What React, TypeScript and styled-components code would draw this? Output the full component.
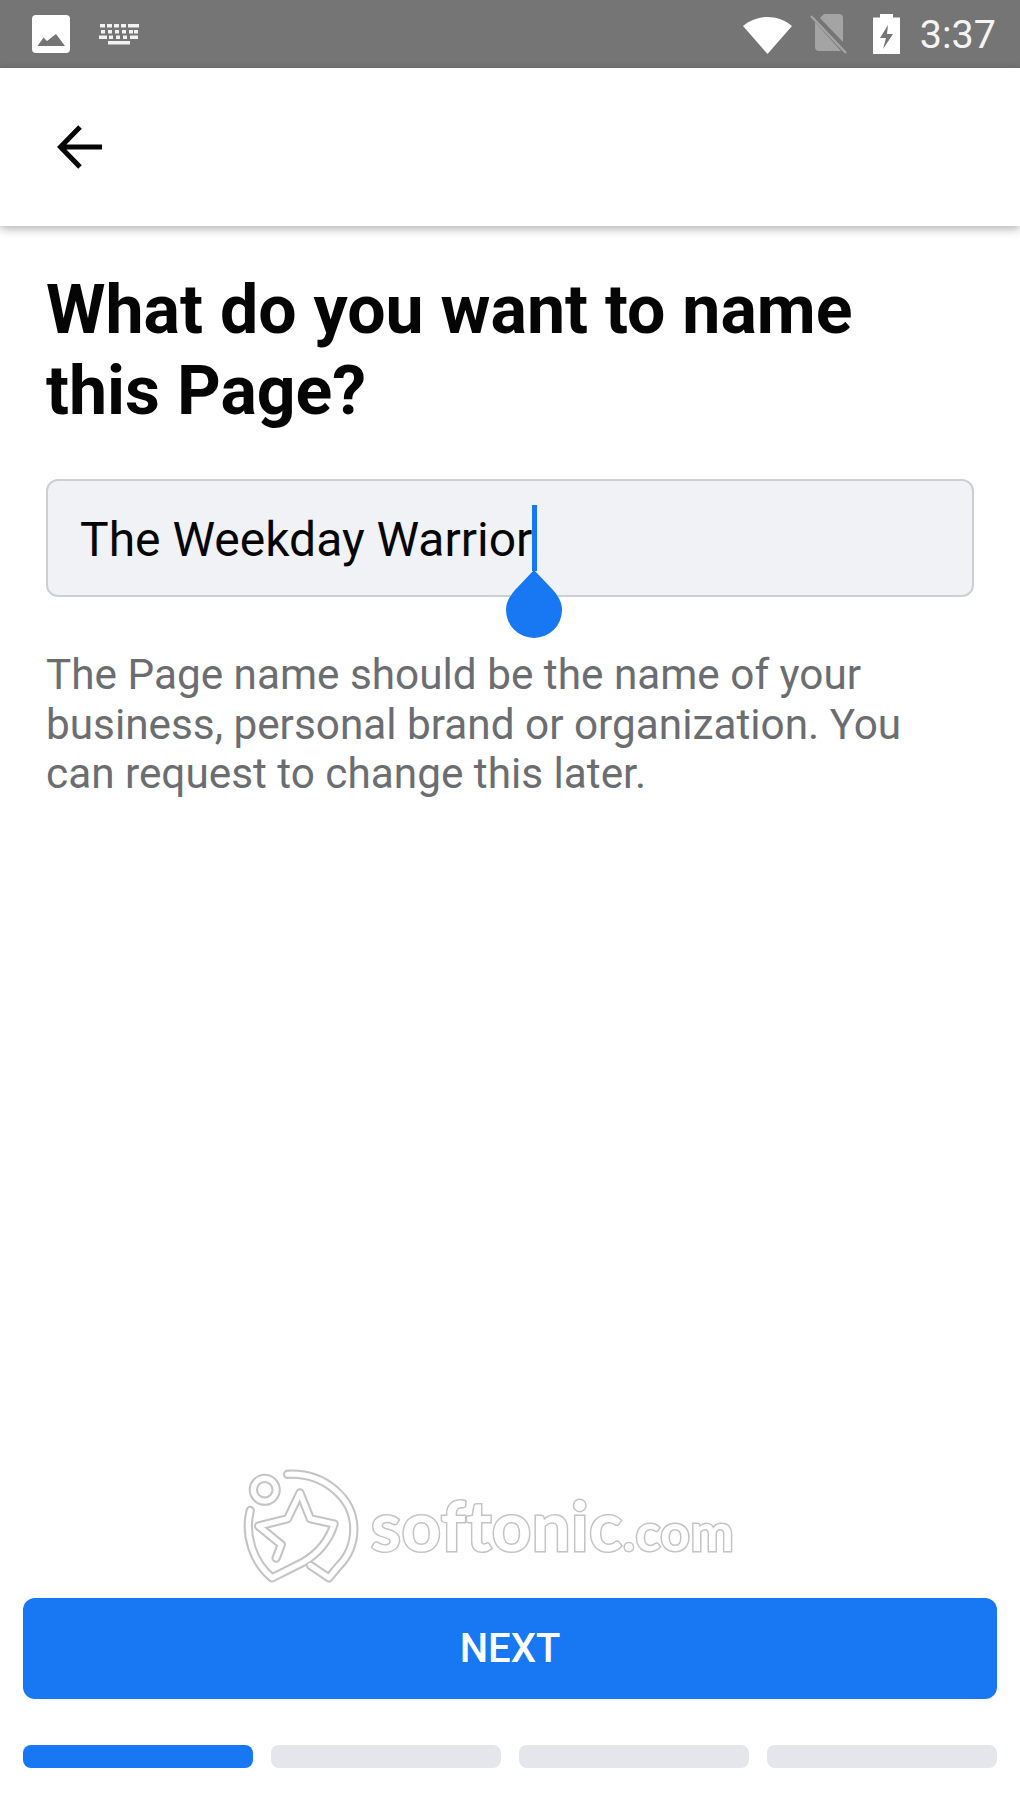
import React from "react";
import styled, { createGlobalStyle } from "styled-components";

const Global = createGlobalStyle`
  html, body { margin: 0; padding: 0; background: #fff; }
  * { box-sizing: border-box; }
`;

const Page = styled.div`
  width: 1020px;
  height: 1813px;
  display: flex;
  flex-direction: column;
  background: #fff;
  font-family: Roboto, "Liberation Sans", sans-serif;
  overflow: hidden;
`;

const StatusBar = styled.div`
  height: 68px;
  flex: none;
  background: #757575;
  display: flex;
  align-items: center;
  padding: 0 24px 0 32px;
`;

const StatusLeft = styled.div`
  display: flex;
  align-items: center;
  gap: 29px;
`;

const StatusRight = styled.div`
  margin-left: auto;
  display: flex;
  align-items: center;
`;

const Clock = styled.span`
  color: #f4f4f4;
  font-size: 39.5px;
  font-weight: 400;
  margin-left: 20px;
`;

const Header = styled.header`
  height: 158px;
  flex: none;
  display: flex;
  align-items: center;
  padding-left: 57px;
  background: #fff;
  box-shadow: 0 3px 9px rgba(0, 0, 0, 0.3);
  position: relative;
`;

const Content = styled.main`
  flex: 1;
  display: flex;
  flex-direction: column;
  padding: 44px 46px 0;
`;

const Title = styled.h1`
  margin: 0;
  font-size: 68px;
  line-height: 81px;
  font-weight: 700;
  color: #050505;
`;

const Field = styled.div`
  position: relative;
  margin-top: 47px;
  height: 118px;
  display: flex;
  align-items: center;
  padding: 3px 0 0 32px;
  background: #f0f2f5;
  border: 2px solid #ccd0d5;
  border-radius: 12px;
  font-size: 48px;
  color: #050505;
`;

const Cursor = styled.span`
  position: relative;
  display: inline-block;
  width: 0;
  height: 0;
`;

const CaretLine = styled.span`
  position: absolute;
  left: 0;
  top: -35px;
  width: 5px;
  height: 66px;
  background: #1877f2;
`;

const CaretHandle = styled.svg`
  position: absolute;
  left: -26px;
  top: 30px;
`;

const Help = styled.p`
  margin: 0;
  margin-top: 53px;
  font-size: 42.3px;
  line-height: 49.5px;
  color: #6b6d71;
`;

const Footer = styled.footer`
  flex: none;
  display: flex;
  flex-direction: column;
  padding: 0 23px 45px;
`;

const Watermark = styled.div`
  display: flex;
  align-items: center;
  justify-content: center;
  gap: 12px;
  height: 116px;
  margin-bottom: 15px;
  padding-right: 43px;
`;

const WatermarkText = styled.span`
  font-family: Lato, "Open Sans", sans-serif;
  font-size: 68.8px;
  font-weight: 700;
  letter-spacing: 0.5px;
  line-height: 1;
  color: #fff;
  -webkit-text-stroke: 3px #c4c4c4;
  paint-order: stroke fill;
  filter: blur(0.6px);
`;

const WatermarkSmall = styled.span`
  font-size: 51.6px;
`;

const LogoSvg = styled.svg`
  flex: none;
  filter: blur(0.6px);
`;

const NextButton = styled.button`
  height: 101px;
  width: 100%;
  border: 0;
  border-radius: 12px;
  background: #1877f2;
  color: #fff;
  font-family: Roboto, "Liberation Sans", sans-serif;
  font-size: 40px;
  font-weight: 500;
`;

const Progress = styled.div`
  margin-top: 46px;
  display: grid;
  grid-template-columns: repeat(4, 1fr);
  gap: 18px;
`;

const Step = styled.div<{ $active?: boolean }>`
  height: 23px;
  border-radius: 8px;
  background: ${(p) => (p.$active ? "#1877f2" : "#e4e6eb")};
`;

const PictureIcon = () => (
  <svg width="38" height="38" viewBox="0 0 38 38">
    <rect width="38" height="38" rx="4" fill="#fff" />
    <path d="M5.500 31 L11.500 22.500 L15 26 L24 19 L33 31 Z" fill="#757575" />
  </svg>
);

const KeyboardIcon = () => (
  <svg width="40" height="22" viewBox="0 0 40 22" fill="#f2f2f2">
    {[1, 8, 15, 22, 29, 34].map((x) => (
      <rect key={`a${x}`} x={x} y="1" width={x === 34 ? 6 : 5} height="3.500" />
    ))}
    {[1, 8, 15, 22, 29, 34].map((x) => (
      <rect key={`b${x}`} x={x + 1} y="7" width="4" height="3.500" />
    ))}
    {[1, 8, 15, 22, 29].map((x, i) => (
      <rect key={`c${x}`} x={i === 0 ? 0 : x + 2} y="12.500" width={i === 0 ? 8 : i === 4 ? 8 : 4} height="3.500" />
    ))}
    <rect x="9" y="18" width="22" height="3.500" />
  </svg>
);

const WifiIcon = () => (
  <svg width="49" height="39" viewBox="0 0 49 39">
    <path d="M0 11 C14 -1 35 -1 49 11 L24.500 39 Z" fill="#fff" />
  </svg>
);

const NoSimIcon = () => (
  <svg width="37" height="40" viewBox="0 0 37 40" style={{ marginLeft: 18 }}>
    <path d="M10 4 L14 0 H29 Q33 0 33 4 V28 Z M5 8 L31 37 H9 Q5 37 5 33 Z" fill="#a4a4a4" />
    <path d="M1 2 L36 39" stroke="#a4a4a4" strokeWidth="2.500" />
  </svg>
);

const BatteryIcon = () => (
  <svg width="27" height="41" viewBox="0 0 27 41" style={{ marginLeft: 26 }}>
    <path
      fillRule="evenodd"
      d="M7 0 H20 V3.500 H27 V40 H0 V3.500 H7 Z M15 11 L7 24 H13 L10 35 L20 20 H14 Z"
      fill="#fff"
    />
  </svg>
);

const BackIcon = () => (
  <svg width="46" height="46" viewBox="0 0 46 46" fill="none">
    <path d="M45 23 H4 M23 3 L3.500 23 L23 43" stroke="#050505" strokeWidth="5" />
  </svg>
);

const ARC = "M43 7 C78 5 107 30 107 60 C107 76 100 88 92 96 L83 107 L65 95";
const STAR = "M7 42 C1 66 10 92 28 107 L58 92 C75 82 84 68 88 55 L65 50 L55 25 L43 50 L15 57 L37 75 L32 88";

const SoftonicLogo = () => (
  <LogoSvg width="116" height="116" viewBox="0 0 112 112" fill="none">
    <g stroke="#c4c4c4" strokeWidth="9" strokeLinecap="round" strokeLinejoin="round">
      <circle cx="21" cy="22" r="11" />
      <path d={ARC} />
      <path d={STAR} />
    </g>
    <g stroke="#fff" strokeWidth="5" strokeLinecap="round" strokeLinejoin="round">
      <circle cx="21" cy="22" r="11" />
      <path d={ARC} />
      <path d={STAR} />
    </g>
  </LogoSvg>
);

export default function App() {
  return (
    <Page>
      <Global />
      <StatusBar>
        <StatusLeft>
          <PictureIcon />
          <KeyboardIcon />
        </StatusLeft>
        <StatusRight>
          <WifiIcon />
          <NoSimIcon />
          <BatteryIcon />
          <Clock>3:37</Clock>
        </StatusRight>
      </StatusBar>
      <Header>
        <BackIcon />
      </Header>
      <Content>
        <Title>
          What do you want to name
          <br />
          this Page?
        </Title>
        <Field>
          The Weekday Warrior
          <Cursor>
            <CaretLine />
            <CaretHandle width="56" height="68" viewBox="0 0 56 68">
              <path d="M28 0 L47 20 C52 26 56 32 56 40 A28 28 0 0 1 0 40 C0 32 4 26 9 20 Z" fill="#1877f2" />
            </CaretHandle>
          </Cursor>
        </Field>
        <Help>
          The Page name should be the name of your
          <br />
          business, personal brand or organization. You
          <br />
          can request to change this later.
        </Help>
      </Content>
      <Footer>
        <Watermark>
          <SoftonicLogo />
          <WatermarkText>
            softonic<WatermarkSmall>.com</WatermarkSmall>
          </WatermarkText>
        </Watermark>
        <NextButton>NEXT</NextButton>
        <Progress>
          <Step $active />
          <Step />
          <Step />
          <Step />
        </Progress>
      </Footer>
    </Page>
  );
}
